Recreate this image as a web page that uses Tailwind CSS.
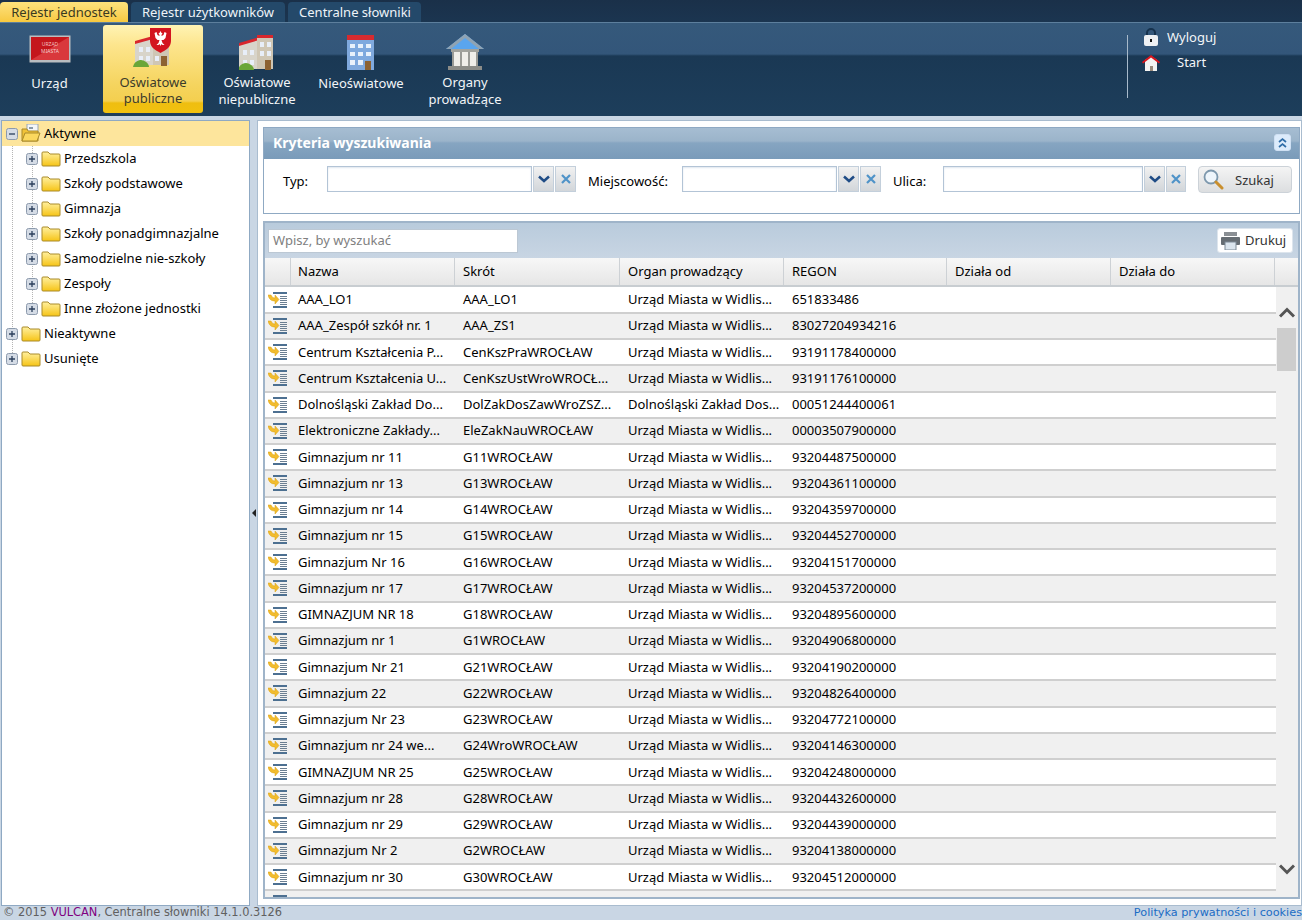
<!DOCTYPE html>
<html lang="pl"><head><meta charset="utf-8"><title>Rejestr jednostek</title>
<script src="https://cdn.jsdelivr.net/npm/@tailwindcss/browser@4"></script></head>
<body class="m-0 h-[920px] w-[1302px] overflow-hidden bg-[#c9d6e4] font-['Noto_Sans',sans-serif] text-[13px] leading-none text-black">
<div class="flex h-[22px] items-end gap-[3px] bg-gradient-to-b from-[#1a3049] to-[#1b3550]">
  <div class="flex h-[20px] w-[128px] items-center justify-center rounded-t-[4px] bg-gradient-to-b from-[#fde27c] to-[#f7c93f] text-[#3a3a20]">Rejestr jednostek</div>
  <div class="flex h-[20px] w-[154px] items-center justify-center rounded-t-[4px] bg-[#24496a] text-[#eef3f8]">Rejestr użytkowników</div>
  <div class="flex h-[20px] w-[133px] items-center justify-center rounded-t-[4px] bg-[#24496a] pl-px text-[#eef3f8]">Centralne słowniki</div>
</div>
<header class="flex h-[94px] border-t border-[#5d7f9d] bg-[linear-gradient(#35597b_0,#33567a_31px,#1a3854_33px,#1d3e5b_100%)] text-[#f2f5f8]">
  <nav class="flex gap-[4px] pt-[2px] text-center">
    <a class="flex h-[88px] w-[99px] flex-col items-center pt-[10px]">
      <svg width="42" height="28" viewBox="0 0 42 28"><rect x=".5" y=".5" width="41" height="27" fill="#b9bdc0"/><rect x="2" y="2" width="38" height="23" fill="#c4161c"/><path d="M2 25 40 2v23z" fill="#d9383c"/><text x="21" y="11" font-size="5" text-anchor="middle" fill="#f3c0c0">URZĄD</text><text x="21" y="18" font-size="5" text-anchor="middle" fill="#f3d0d0">MIASTA</text></svg>
      <span class="mt-[12px] leading-[16px]">Urząd</span></a>
    <a class="flex h-[88px] w-[100px] flex-col items-center rounded-[3px] bg-[linear-gradient(#fff3b4_0,#fde58d_20px,#f5d45e_60px,#f4cf4f_76px,#efbe10_78px,#f1c10f_100%)] pt-[2px] text-[#3b3b2a]">
      <svg width="40" height="42" viewBox="0 0 40 42"><path d="M2 15 20 10V38H2z" fill="#d8d4ca"/><path d="M2 14 20 9v3L2 17z" fill="#d8262c"/><rect x="20" y="13" width="16" height="25" fill="#cfc6b4"/><g fill="#e8eef8"><rect x="6" y="20" width="4" height="5"/><rect x="13" y="20" width="4" height="5"/><rect x="6" y="29" width="4" height="5"/><rect x="13" y="29" width="4" height="5"/><rect x="22" y="29" width="4" height="5"/></g><rect x="28" y="29" width="6" height="10" fill="#8d6232"/><path d="M0 40c1-5 5-7 8-7s8 3 8 7z" fill="#6aa638"/><path d="M17 1h21v13c0 6-5 9-10.500 12C22 23 17 20 17 14z" fill="#d3141f"/><path d="M27.500 4l1 2h1l-1 2v1l2-1 1-3 2 1-1 5-2 2h-2l1 3 2 2h-2l-1-1-1 2-1-2-1 1h-2l2-2 1-3h-2l-2-2-1-5 2-1 1 3 2 1V8l-1-2h1z" fill="#fff"/></svg>
      <span class="mt-[5px] leading-[16px]">Oświatowe<br>publiczne</span></a>
    <a class="flex h-[88px] w-[100px] flex-col items-center pt-[10px]">
      <svg width="36" height="36" viewBox="0 0 36 36"><path d="M0 9 20 3V34H0z" fill="#d8d4ca"/><path d="M0 8 20 2v3L0 11z" fill="#d8262c"/><rect x="18" y="1" width="16" height="33" fill="#cfc6b4"/><rect x="18" y="0" width="16" height="3" fill="#d8262c"/><g fill="#e8eef8"><rect x="4" y="15" width="4" height="5"/><rect x="11" y="15" width="4" height="5"/><rect x="4" y="25" width="4" height="5"/><rect x="11" y="25" width="4" height="5"/><rect x="21" y="7" width="4" height="5"/><rect x="28" y="7" width="4" height="5"/><rect x="21" y="16" width="4" height="5"/><rect x="28" y="16" width="4" height="5"/></g><rect x="26" y="25" width="6" height="10" fill="#8d6232"/><path d="M-1 35c1-5 5-7 8-7s8 3 8 7z" fill="#6aa638"/></svg>
      <span class="mt-[3px] leading-[17px]">Oświatowe<br>niepubliczne</span></a>
    <a class="flex h-[88px] w-[100px] flex-col items-center pt-[10px]">
      <svg width="28" height="36" viewBox="0 0 28 36"><rect width="27" height="35" fill="#7fa9de"/><rect width="27" height="5" fill="#d62b30"/><g fill="#e9f1fb"><rect x="3" y="9" width="5" height="4"/><rect x="11" y="9" width="5" height="4"/><rect x="19" y="9" width="5" height="4"/><rect x="3" y="17" width="5" height="4"/><rect x="11" y="17" width="5" height="4"/><rect x="19" y="17" width="5" height="4"/><rect x="3" y="25" width="5" height="5"/><rect x="11" y="25" width="5" height="5"/></g><rect x="18" y="26" width="6" height="9" fill="#8d6232"/></svg>
      <span class="mt-[4px] leading-[16px]">Nieoświatowe</span></a>
    <a class="flex h-[88px] w-[100px] flex-col items-center pt-[8px]">
      <svg width="38" height="38" viewBox="0 0 38 38"><path d="M19 1 38 16H0z" fill="#5aa5ee"/><path d="M19 1 0 16h5L19 5l14 11h5z" fill="#8fa3b3"/><rect x="5" y="16" width="28" height="3" fill="#a2a39e"/><g fill="#efeeea"><rect x="7" y="19" width="7" height="14"/><rect x="16" y="19" width="6" height="14"/><rect x="24" y="19" width="7" height="14"/></g><g fill="#9a9b97"><rect x="6" y="19" width="2" height="14"/><rect x="14" y="19" width="2" height="14"/><rect x="22" y="19" width="2" height="14"/><rect x="30" y="19" width="2" height="14"/></g><rect x="2" y="33" width="34" height="4" fill="#8b8c88"/></svg>
      <span class="mt-[3px] leading-[17px]">Organy<br>prowadzące</span></a>
  </nav>
  <div class="ml-auto flex w-[175px] items-start">
    <span class="mt-[12px] h-[63px] border-l border-[#a8bacb]"></span>
    <div class="mt-[4px] flex flex-col">
      <a class="flex h-[20px] items-center pl-[15px]"><svg width="16" height="18" viewBox="0 0 16 18"><path d="M4 8V5a4 4 0 0 1 8 0v3" fill="none" stroke="#16324d" stroke-width="2"/><rect x="1" y="7" width="14" height="11" rx="2" fill="#eef1f4"/><rect x="7" y="11" width="2" height="3" fill="#111"/></svg><span class="ml-[8px]">Wyloguj</span></a>
      <a class="mt-[5px] flex h-[20px] items-center pl-[14px]"><svg width="18" height="17" viewBox="0 0 18 17"><path d="M3 6l6-4 6 4v11H3z" fill="#f4f4f2"/><rect x="8" y="12" width="3" height="5" fill="#9a8a7a"/><path d="M0 8 9 1l9 7-1 1.500L9 3.500 1 9.500z" fill="#d9141c"/></svg><span class="ml-[17px]">Start</span></a>
    </div>
  </div>
</header>
<main class="flex h-[790px] border-t-[4px] border-[#c9d6e4] pl-px">
  <aside class="relative h-[786px] w-[249px] border border-[#8fa9c3] bg-white">
    <span class="absolute left-[10px] top-[24px] h-[212px] border-l border-dotted border-[#b5b5b5]"></span>
    <span class="absolute left-[30px] top-[24px] h-[162px] border-l border-dotted border-[#b5b5b5]"></span>
    <ul id="tree" class="relative"></ul>
  </aside>
  <div class="flex w-[7px] items-center justify-center"><span class="ml-px border-y-[4px] border-r-[4px] border-y-transparent border-r-[#222]"></span></div>
  <section class="h-[786px] w-[1045px] border border-[#a9bccf] bg-white pl-[5px] pr-[1px] pt-[6px]">
    <div class="h-[87px] w-[1037px] border border-[#8fa9c3]">
      <div class="flex h-[31px] items-center justify-between bg-[linear-gradient(#a6bdd2_0,#9bb4ca_13px,#86a5c1_15px,#7a9bb9_100%)] pb-[2px] pl-[9px] pr-[8px] text-[14px] font-bold text-white">
        <span>Kryteria wyszukiwania</span>
        <span class="flex size-[17px] items-center justify-center rounded-[3px] border border-[#cfe0f3] bg-[#dcebfb]"><svg width="11" height="11" viewBox="0 0 11 11" fill="none" stroke="#2e6da8" stroke-width="1.700"><path d="m2 5 3.500-3L9 5M2 10l3.500-3L9 10"/></svg></span>
      </div>
      <form class="flex items-start pl-[19px] pt-[7px]">
        <label class="flex h-[26px] w-[44px] items-center pt-[4px]">Typ:</label>
        <div class="flex h-[26px] w-[249px] gap-px"><span class="flex-1 border border-[#b3c4d6] bg-white shadow-[inset_0_1px_2px_#dfe6ee]"></span>
          <span class="flex w-[21px] items-center justify-center border border-[#c3cfdb] bg-gradient-to-b from-[#f1f1f1] to-[#d2d6da]"><svg width="12" height="8" viewBox="0 0 12 8" fill="none" stroke="#1f4c86" stroke-width="2.500"><path d="m1 1.500 5 4.500 5-4.500"/></svg></span>
          <span class="flex w-[21px] items-center justify-center border border-[#c3cfdb] bg-gradient-to-b from-[#f1f1f1] to-[#d2d6da]"><svg width="10" height="10" viewBox="0 0 10 10" stroke="#4f93c8" stroke-width="2.200"><path d="m1 1 8 8M9 1 1 9"/></svg></span></div>
        <label class="ml-[12px] flex h-[26px] w-[94px] items-center pt-[4px]">Miejscowość:</label>
        <div class="flex h-[26px] w-[199px] gap-px"><span class="flex-1 border border-[#b3c4d6] bg-white shadow-[inset_0_1px_2px_#dfe6ee]"></span>
          <span class="flex w-[21px] items-center justify-center border border-[#c3cfdb] bg-gradient-to-b from-[#f1f1f1] to-[#d2d6da]"><svg width="12" height="8" viewBox="0 0 12 8" fill="none" stroke="#1f4c86" stroke-width="2.500"><path d="m1 1.500 5 4.500 5-4.500"/></svg></span>
          <span class="flex w-[21px] items-center justify-center border border-[#c3cfdb] bg-gradient-to-b from-[#f1f1f1] to-[#d2d6da]"><svg width="10" height="10" viewBox="0 0 10 10" stroke="#4f93c8" stroke-width="2.200"><path d="m1 1 8 8M9 1 1 9"/></svg></span></div>
        <label class="ml-[12px] flex h-[26px] w-[50px] items-center pt-[4px]">Ulica:</label>
        <div class="flex h-[26px] w-[243px] gap-px"><span class="flex-1 border border-[#b3c4d6] bg-white shadow-[inset_0_1px_2px_#dfe6ee]"></span>
          <span class="flex w-[21px] items-center justify-center border border-[#c3cfdb] bg-gradient-to-b from-[#f1f1f1] to-[#d2d6da]"><svg width="12" height="8" viewBox="0 0 12 8" fill="none" stroke="#1f4c86" stroke-width="2.500"><path d="m1 1.500 5 4.500 5-4.500"/></svg></span>
          <span class="flex w-[20px] items-center justify-center border border-[#c3cfdb] bg-gradient-to-b from-[#f1f1f1] to-[#d2d6da]"><svg width="10" height="10" viewBox="0 0 10 10" stroke="#4f93c8" stroke-width="2.200"><path d="m1 1 8 8M9 1 1 9"/></svg></span></div>
        <button type="button" class="ml-[12px] flex h-[27px] w-[94px] items-center rounded-[4px] border border-[#ccd2d8] bg-gradient-to-b from-[#f4f4f4] to-[#dcdee0] pl-[4px] text-[#333]">
          <svg width="21" height="21" viewBox="0 0 21 21"><circle cx="8" cy="8" r="6.500" fill="#eef5fb" stroke="#7d98ad" stroke-width="1.800"/><path d="m13 13 6 6" stroke="#c98f2e" stroke-width="3" stroke-linecap="round"/></svg>
          <span class="ml-[11px] pt-[2px]">Szukaj</span></button>
      </form>
    </div>
    <div class="mt-[7px] h-[678px] w-[1037px] border-2 border-[#9fb4c9]">
      <div class="flex h-[35px] items-center justify-between bg-gradient-to-b from-[#b9cbdc] to-[#c8d5e3] pl-[3px] pr-[5px]">
        <span class="flex h-[24px] w-[250px] items-center border border-[#bcc8d4] bg-white pb-px pl-[4px] text-[#808080]">Wpisz, by wyszukać</span>
        <span class="flex h-[25px] w-[76px] items-center gap-[5px] rounded-[3px] border border-[#dde5ed] bg-white pl-[3px] text-[#333]"><svg width="19" height="18" viewBox="0 0 19 18"><rect x="3" y="0" width="13" height="4" fill="#8a8f94"/><rect y="5" width="19" height="8" rx="1" fill="#666d73"/><rect x="4" y="10" width="11" height="8" fill="#dbe5ee" stroke="#7d8a96"/></svg>Drukuj</span>
      </div>
      <div class="flex h-[29px] border-b-2 border-[#c8cdd1] bg-gradient-to-b from-[#f7f7f7] to-[#e6e6e6]">
        <span class="w-[26px] border-r border-[#cdd1d5]"></span>
        <span class="flex w-[164px] items-center border-r border-[#cdd1d5] pl-[7px]">Nazwa</span>
        <span class="flex w-[165px] items-center border-r border-[#cdd1d5] pl-[8px]">Skrót</span>
        <span class="flex w-[164px] items-center border-r border-[#cdd1d5] pl-[8px]">Organ prowadzący</span>
        <span class="flex w-[163px] items-center border-r border-[#cdd1d5] pl-[8px]">REGON</span>
        <span class="flex w-[164px] items-center border-r border-[#cdd1d5] pl-[8px]">Działa od</span>
        <span class="flex w-[164px] items-center border-r border-[#cdd1d5] pl-[8px]">Działa do</span>
      </div>
      <div class="flex h-[610px] overflow-hidden">
        <div id="rows" class="w-[1011px] shrink-0 pt-[0.5px]"></div>
        <div class="relative w-[22px] bg-[#f0f0f0]">
          <svg class="absolute left-[3px] top-[20px]" width="16" height="11" viewBox="0 0 16 11" fill="none" stroke="#555" stroke-width="3"><path d="m1 9.500 7-7 7 7"/></svg>
          <span class="absolute left-[1px] top-[41px] h-[43px] w-[19px] bg-[#cdcdcd]"></span>
          <svg class="absolute left-[3px] top-[577px]" width="16" height="11" viewBox="0 0 16 11" fill="none" stroke="#555" stroke-width="3"><path d="m1 1.500 7 7 7-7"/></svg>
        </div>
      </div>
    </div>
  </section>
</main>
<footer class="flex h-[14px] items-center justify-between whitespace-nowrap pl-[3px] font-['DejaVu_Sans',sans-serif] text-[11.400px] text-[#606060]">
  <span>© 2015 <span class="text-[#800080]">VULCAN</span>, Centralne słowniki 14.1.0.3126</span>
  <a class="text-[11.250px] text-[#1a6cc4]">Polityka prywatności i cookies</a>
</footer>
<script>
var icon='<svg width="20" height="16" viewBox="0 0 20 16"><rect x="5" y="0" width="14" height="2" fill="#4d7091"/><rect x="5" y="14" width="14" height="2" fill="#4d7091"/><g fill="#6b7f92"><rect x="12" y="4" width="7" height="1"/><rect x="12" y="6" width="7" height="1"/><rect x="12" y="8" width="7" height="1"/><rect x="12" y="10" width="7" height="1"/><rect x="12" y="12" width="7" height="1"/></g><path d="M0 3h3c1 2 2 3 4 3V3l4 4.500L7 12V9C3 9 1 7 0 3z" fill="#f2bc2e" stroke="#d9a010" stroke-width=".5"/></svg>';
var data=[["AAA_LO1","AAA_LO1","Urząd Miasta w Widlis...","651833486"],["AAA_Zespół szkół nr. 1","AAA_ZS1","Urząd Miasta w Widlis...","83027204934216"],["Centrum Kształcenia P...","CenKszPraWROCŁAW","Urząd Miasta w Widlis...","93191178400000"],["Centrum Kształcenia U...","CenKszUstWroWROCŁ...","Urząd Miasta w Widlis...","93191176100000"],["Dolnośląski Zakład Do...","DolZakDosZawWroZSZ...","Dolnośląski Zakład Dos...","00051244400061"],["Elektroniczne Zakłady...","EleZakNauWROCŁAW","Urząd Miasta w Widlis...","00003507900000"],["Gimnazjum nr 11","G11WROCŁAW","Urząd Miasta w Widlis...","93204487500000"],["Gimnazjum nr 13","G13WROCŁAW","Urząd Miasta w Widlis...","93204361100000"],["Gimnazjum nr 14","G14WROCŁAW","Urząd Miasta w Widlis...","93204359700000"],["Gimnazjum nr 15","G15WROCŁAW","Urząd Miasta w Widlis...","93204452700000"],["Gimnazjum Nr 16","G16WROCŁAW","Urząd Miasta w Widlis...","93204151700000"],["Gimnazjum nr 17","G17WROCŁAW","Urząd Miasta w Widlis...","93204537200000"],["GIMNAZJUM NR 18","G18WROCŁAW","Urząd Miasta w Widlis...","93204895600000"],["Gimnazjum nr 1","G1WROCŁAW","Urząd Miasta w Widlis...","93204906800000"],["Gimnazjum Nr 21","G21WROCŁAW","Urząd Miasta w Widlis...","93204190200000"],["Gimnazjum 22","G22WROCŁAW","Urząd Miasta w Widlis...","93204826400000"],["Gimnazjum Nr 23","G23WROCŁAW","Urząd Miasta w Widlis...","93204772100000"],["Gimnazjum nr 24 we...","G24WroWROCŁAW","Urząd Miasta w Widlis...","93204146300000"],["GIMNAZJUM NR 25","G25WROCŁAW","Urząd Miasta w Widlis...","93204248000000"],["Gimnazjum nr 28","G28WROCŁAW","Urząd Miasta w Widlis...","93204432600000"],["Gimnazjum nr 29","G29WROCŁAW","Urząd Miasta w Widlis...","93204439000000"],["Gimnazjum Nr 2","G2WROCŁAW","Urząd Miasta w Widlis...","93204138000000"],["Gimnazjum nr 30","G30WROCŁAW","Urząd Miasta w Widlis...","93204512000000"],["","","",""]];
document.getElementById('rows').innerHTML=data.map(function(r,i){
 return '<div class="flex h-[26.25px] items-center border-b-2 border-[#cfcfcf] '+(i%2?'bg-[#f0f0f0]':'bg-white')+'"><span class="flex w-[26px] justify-center">'+icon+'</span><span class="w-[164px] pl-[7px] whitespace-nowrap">'+r[0]+'</span><span class="w-[165px] pl-[8px] whitespace-nowrap">'+r[1]+'</span><span class="w-[164px] pl-[8px] whitespace-nowrap">'+r[2]+'</span><span class="pl-[8px]">'+r[3]+'</span></div>';
}).join('');
function exp(m){return '<svg width="12" height="12" viewBox="0 0 12 12"><rect x=".5" y=".5" width="11" height="11" rx="2" fill="#d5dce6" stroke="#8c9aac"/><path d="'+(m?'M3 6h6':'M3 6h6M6 3v6')+'" stroke="#2b3f5c" stroke-width="1.300"/></svg>';}
var folder='<svg width="20" height="17" viewBox="0 0 20 17"><defs><linearGradient id="fg" x1="0" y1="0" x2="0" y2="1"><stop offset="0" stop-color="#fff0a0"/><stop offset="1" stop-color="#f6c416"/></linearGradient></defs><path d="M1 3a1 1 0 0 1 1-1h5l2 2h9a1 1 0 0 1 1 1v10a1 1 0 0 1-1 1H2a1 1 0 0 1-1-1z" fill="url(#fg)" stroke="#a98a2a"/></svg>';
var open='<svg width="20" height="19" viewBox="0 0 20 19"><rect x="6" y="0" width="11" height="10" fill="#f4f6f8" stroke="#9aa6b0"/><rect x="8" y="3" width="4" height="2" fill="#8a9aa8"/><path d="M1 5h5l1 2h10v10H1z" fill="#f0c238" stroke="#a98a2a"/><path d="M4 9h15l-3 8H1z" fill="#fbd85e" stroke="#a98a2a"/></svg>';
var tree=[[0,1,"Aktywne"],[1,0,"Przedszkola"],[1,0,"Szkoły podstawowe"],[1,0,"Gimnazja"],[1,0,"Szkoły ponadgimnazjalne"],[1,0,"Samodzielne nie-szkoły"],[1,0,"Zespoły"],[1,0,"Inne złożone jednostki"],[0,0,"Nieaktywne"],[0,0,"Usunięte"]];
document.getElementById('tree').innerHTML=tree.map(function(t){
 return '<li class="flex h-[25px] items-center gap-[3px] '+(t[1]?'bg-[#fde59c]':'')+' '+(t[0]?'pl-[24px]':'pl-[4px]')+'">'+exp(t[1])+(t[1]?open:folder)+'<span>'+t[2]+'</span></li>';
}).join('');
</script>
</body></html>
